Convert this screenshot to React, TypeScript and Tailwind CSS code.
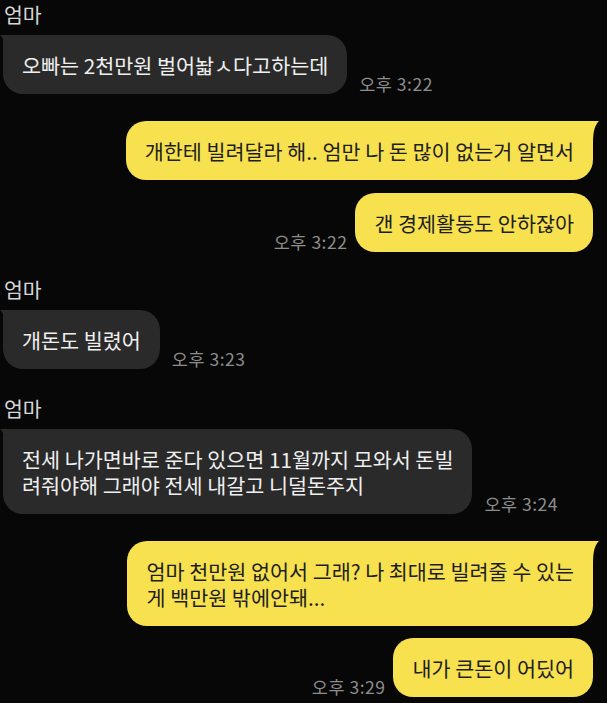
import React from "react";

const FONT = { fontFamily: '"Noto Sans CJK KR", "Noto Sans", sans-serif' };

function GrayTail() {
  return (
    <svg className="absolute left-[-3px] top-0" width="14" height="22" viewBox="0 0 14 22">
      <path d="M14 0 L0 0 C4 4 6 10 6 22 L14 22 Z" fill="#2a2a2a" />
    </svg>
  );
}

function YellowTail() {
  return (
    <svg className="absolute right-[-6px] top-0" width="14" height="22" viewBox="0 0 14 22">
      <path d="M0 0 L14 0 C10 4 8 10 8 22 L0 22 Z" fill="#f7e14f" />
    </svg>
  );
}

function Label({ className }: { className?: string }) {
  return (
    <div className={`pl-[4px] h-[28px] text-[20.5px] leading-[28px] text-[#d6d6d6] ${className ?? ""}`}>
      엄마
    </div>
  );
}

function Time({ t, className }: { t: string; className?: string }) {
  return (
    <div className={`text-[17.5px] tracking-[0.5px] leading-[20px] text-[#8d8d8d] whitespace-nowrap ${className ?? ""}`}>{t}</div>
  );
}

function Lines({ lines }: { lines: string[] }) {
  return (
    <div className="relative flex flex-col">
      {lines.map((l, i) => (
        <div key={i} className="h-[26px] leading-[26px]">
          {l}
        </div>
      ))}
    </div>
  );
}

function GrayRow({ lines, time, tail, className }: { lines: string[]; time?: string; tail?: boolean; className?: string }) {
  return (
    <div className={`flex items-end pl-[3px] ${className ?? ""}`}>
      <div className="relative rounded-[20px] rounded-tl-[6px] bg-[#2a2a2a] px-[19px] pt-[17px] pb-[16px] text-[20.7px] text-[#efefef] whitespace-nowrap">
        {tail && <GrayTail />}
        <Lines lines={lines} />
      </div>
      {time && <Time t={time} className="ml-[12px]" />}
    </div>
  );
}

function YellowRow({ lines, time, tail, className }: { lines: string[]; time?: string; tail?: boolean; className?: string }) {
  return (
    <div className={`flex items-end justify-end pr-[14px] ${className ?? ""}`}>
      {time && <Time t={time} className="mr-[8px]" />}
      <div
        className={`relative rounded-[20px] ${tail ? "rounded-tr-[6px]" : ""} bg-[#f7e14f] px-[19px] pt-[17px] pb-[16px] text-[20.7px] text-[#1e1e1e] whitespace-nowrap`}
      >
        {tail && <YellowTail />}
        <Lines lines={lines} />
      </div>
    </div>
  );
}

export default function App() {
  return (
    <div className="w-[607px] h-[703px] overflow-hidden bg-[#070707]" style={FONT}>
      <div className="flex flex-col">
        <Label />
        <GrayRow className="mt-[7px]" tail lines={["오빠는 2천만원 벌어놟ㅅ다고하는데"]} time="오후 3:22" />
        <YellowRow className="mt-[27px]" tail lines={["개한테 빌려달라 해.. 엄만 나 돈 많이 없는거 알면서"]} />
        <YellowRow className="mt-[13px]" lines={["갠 경제활동도 안하잖아"]} time="오후 3:22" />
        <Label className="mt-[23px]" />
        <GrayRow className="mt-[7px]" tail lines={["개돈도 빌렸어"]} time="오후 3:23" />
        <Label className="mt-[25px]" />
        <GrayRow
          className="mt-[7px]"
          tail
          lines={["전세 나가면바로 준다 있으면 11월까지 모와서 돈빌", "려줘야해 그래야 전세 내갈고 니덜돈주지"]}
          time="오후 3:24"
        />
        <YellowRow
          className="mt-[27px]"
          tail
          lines={["엄마 천만원 없어서 그래? 나 최대로 빌려줄 수 있는", "게 백만원 밖에안돼..."]}
        />
        <YellowRow className="mt-[12px]" lines={["내가 큰돈이 어딨어"]} time="오후 3:29" />
      </div>
    </div>
  );
}
